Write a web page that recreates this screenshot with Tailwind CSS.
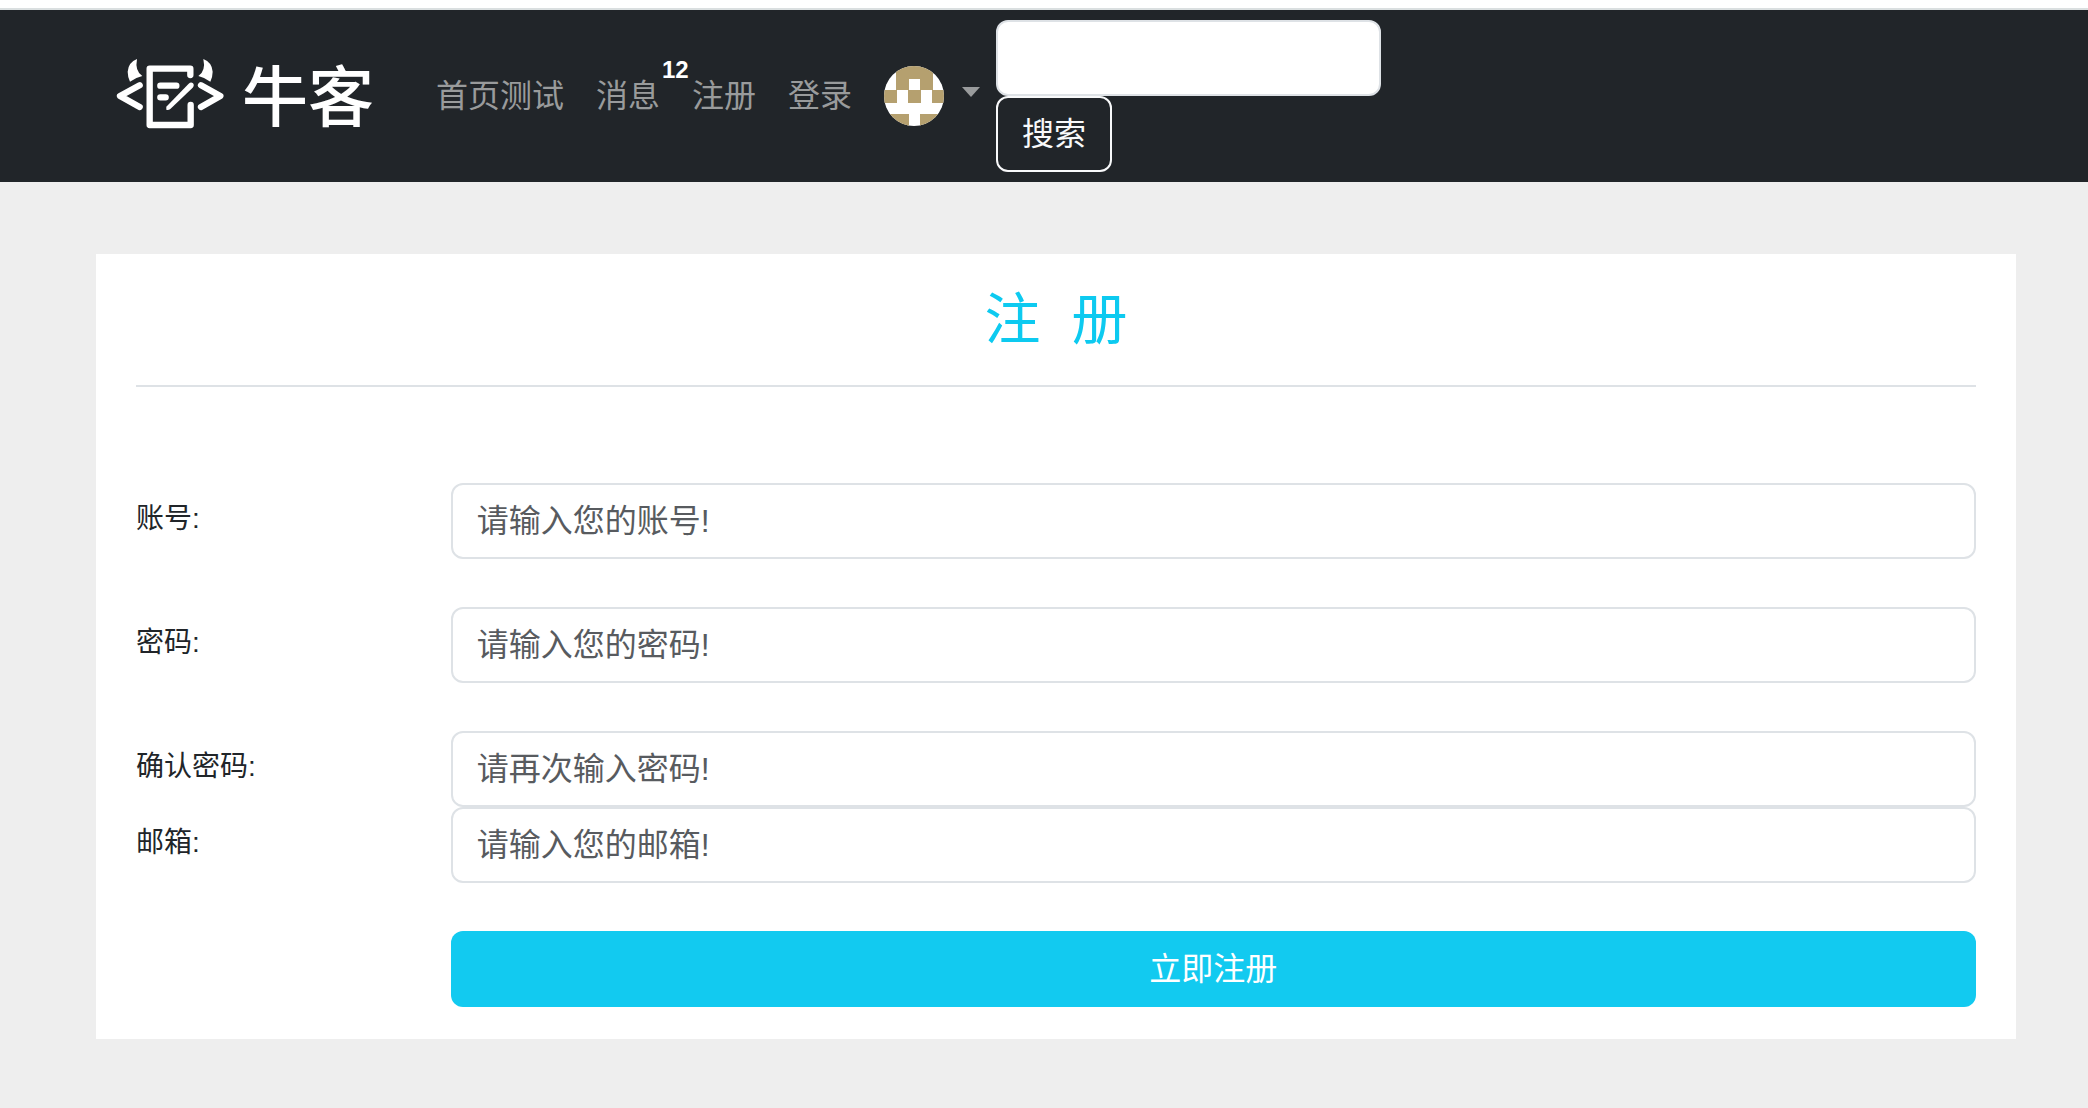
<!DOCTYPE html>
<html lang="zh-CN">
<head>
<meta charset="utf-8">
<meta name="viewport" content="width=device-width, initial-scale=1">
<title>牛客 - 注册</title>
<script src="https://cdn.jsdelivr.net/npm/@tailwindcss/browser@4"></script>
</head>
<body class="flex min-h-screen flex-col bg-[#eeeeee] font-['Liberation_Sans','Noto_Sans_CJK_SC',sans-serif] text-[32px] leading-[48px] text-[#212529]">
<div class="h-2 bg-white"></div>
<header class="border-t-2 border-[#dadfe0] bg-[#212529]">
  <nav class="flex items-center py-[10px] pr-[72px] pl-[116px]">
    <a href="#" class="mr-[46px] flex items-center gap-[18px] text-white" aria-label="牛客">
      <svg class="mb-1 h-[72px] w-[108px]" viewBox="50 55 324 216" fill="none" stroke="currentColor" stroke-linecap="round" stroke-linejoin="round" stroke-width="19" aria-hidden="true">
        <path d="M273 106V87H151V256H274V196"/>
        <path d="M121 137L62 169L121 202M305 137L363 169L305 202"/>
        <path d="M183 138H231M183 173H199"/>
        <path d="M201 210V201L268 132Q275 126 281 131Q286 137 280 144L213 208Q207 212 201 210Z" fill="currentColor" stroke="none"/>
        <path d="M113 58Q87 68 85 96Q85 111 92 126Q108 114 129 109Q106 94 113 58ZM312 58Q338 68 340 96Q340 111 333 126Q317 114 297 109Q320 94 312 58Z" fill="currentColor" stroke="none"/>
      </svg>
      <span class="pt-1 text-[66px] leading-[72px] font-medium">牛客</span>
    </a>
    <ul class="flex items-center text-[#999b9c]">
      <li><a href="#" class="block px-4">首页测试</a></li>
      <li><a href="#" class="relative block px-4">消息<span class="absolute -top-[26px] left-[82px] text-2xl leading-[48px] font-bold text-white">12</span></a></li>
      <li><a href="#" class="block px-4">注册</a></li>
      <li><a href="#" class="block px-4">登录</a></li>
      <li>
        <button type="button" class="flex items-center px-4" aria-label="用户菜单">
          <svg class="size-[60px] rounded-full" viewBox="0 0 60 60" shape-rendering="crispEdges" aria-hidden="true">
            <path fill="#fff" d="M0 0h60v60H0z"/>
            <path fill="#b5a06f" d="M12 0h37v24H36V13H25v11H12zM0 24h13v13H0zM24 24h13v13H24zM48 24h12v13H48zM0 48h25v12H0zM36 48h24v12H36z"/>
          </svg>
          <svg class="mb-2 ml-[18px] h-[10px] w-[18px]" viewBox="0 0 18 10" fill="currentColor" aria-hidden="true"><path d="M0 0h18L9 10z"/></svg>
        </button>
      </li>
    </ul>
    <form class="flex flex-col items-start">
      <input type="search" aria-label="搜索" class="h-[76px] w-[385px] rounded-xl border-2 border-[#dee2e6] bg-white px-6 text-[#212529]">
      <button type="submit" class="h-[76px] rounded-xl border-2 border-[#f8f9fa] px-6 text-[#f8f9fa]">搜索</button>
    </form>
  </nav>
</header>
<main class="py-[72px] pr-[72px] pl-24">
  <section class="bg-white px-10 pt-8 pb-8">
    <h1 class="border-b-2 border-[#dee2e6] pb-8 text-center text-[56px] leading-[67px] text-[#0dcaf0]">注&nbsp;&nbsp;册</h1>
    <form class="pt-24">
      <div class="mb-12 grid grid-cols-12 gap-x-12">
        <label for="username" class="col-span-2 pt-[15px] text-[28px] leading-[42px]">账号:</label>
        <input id="username" type="text" placeholder="请输入您的账号!" class="col-span-10 h-[76px] rounded-xl border-2 border-[#dee2e6] px-6 placeholder:text-[#585b5f]">
      </div>
      <div class="mb-12 grid grid-cols-12 gap-x-12">
        <label for="password" class="col-span-2 pt-[15px] text-[28px] leading-[42px]">密码:</label>
        <input id="password" type="password" placeholder="请输入您的密码!" class="col-span-10 h-[76px] rounded-xl border-2 border-[#dee2e6] px-6 placeholder:text-[#585b5f]">
      </div>
      <div class="grid grid-cols-12 gap-x-12">
        <label for="confirm" class="col-span-2 pt-[15px] text-[28px] leading-[42px]">确认密码:</label>
        <input id="confirm" type="password" placeholder="请再次输入密码!" class="col-span-10 h-[76px] rounded-xl border-2 border-[#dee2e6] px-6 placeholder:text-[#585b5f]">
      </div>
      <div class="mb-12 grid grid-cols-12 gap-x-12">
        <label for="email" class="col-span-2 pt-[15px] text-[28px] leading-[42px]">邮箱:</label>
        <input id="email" type="email" placeholder="请输入您的邮箱!" class="col-span-10 h-[76px] rounded-xl border-2 border-[#dee2e6] px-6 placeholder:text-[#585b5f]">
      </div>
      <div class="grid grid-cols-12 gap-x-12">
        <button type="submit" class="col-span-10 col-start-3 h-[76px] rounded-xl bg-[#12caf0] text-white">立即注册</button>
      </div>
    </form>
  </section>
</main>
</body>
</html>
